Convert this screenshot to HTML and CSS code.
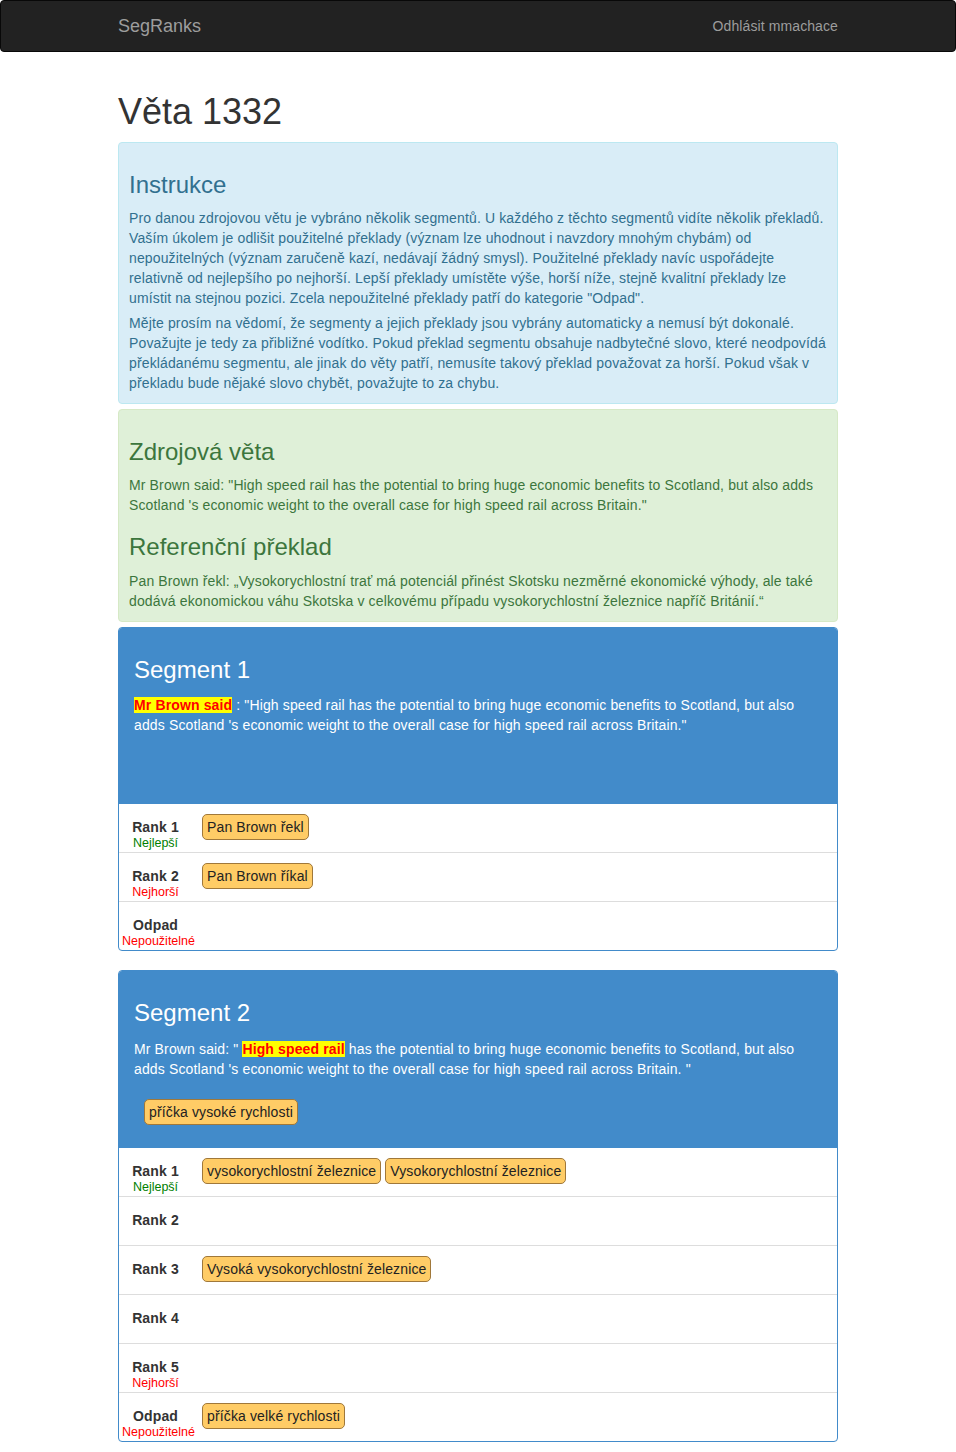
FILE: index.html
```html
<!DOCTYPE html>
<html lang="cs">
<head>
<meta charset="utf-8">
<title>SegRanks</title>
<link rel="stylesheet" href="styles.css">
</head>
<body>
<nav class="navbar">
  <div class="navbar-inner">
    <a class="brand" href="#">SegRanks</a>
    <a class="nav-link" href="#">Odhlásit mmachace</a>
  </div>
</nav>
<main class="container">
  <h1 class="page-title">Věta 1332</h1>

  <div class="alert alert-info">
    <h3>Instrukce</h3>
    <p>Pro danou zdrojovou větu je vybráno několik segmentů. U každého z těchto segmentů vidíte několik překladů. Vaším úkolem je odlišit použitelné překlady (význam lze uhodnout i navzdory mnohým chybám) od nepoužitelných (význam zaručeně kazí, nedávají žádný smysl). Použitelné překlady navíc uspořádejte relativně od nejlepšího po nejhorší. Lepší překlady umístěte výše, horší níže, stejně kvalitní překlady lze umístit na stejnou pozici. Zcela nepoužitelné překlady patří do kategorie "Odpad".</p>
    <p>Mějte prosím na vědomí, že segmenty a jejich překlady jsou vybrány automaticky a nemusí být dokonalé. Považujte je tedy za přibližné vodítko. Pokud překlad segmentu obsahuje nadbytečné slovo, které neodpovídá překládanému segmentu, ale jinak do věty patří, nemusíte takový překlad považovat za horší. Pokud však v překladu bude nějaké slovo chybět, považujte to za chybu.</p>
  </div>

  <div class="alert alert-success">
    <h3>Zdrojová věta</h3>
    <p>Mr Brown said: "High speed rail has the potential to bring huge economic benefits to Scotland, but also adds Scotland 's economic weight to the overall case for high speed rail across Britain."</p>
    <h3>Referenční překlad</h3>
    <p>Pan Brown řekl: „Vysokorychlostní trať má potenciál přinést Skotsku nezměrné ekonomické výhody, ale také dodává ekonomickou váhu Skotska v celkovému případu vysokorychlostní železnice napříč Británií.“</p>
  </div>

  <section class="panel">
    <div class="panel-heading">
      <h3>Segment 1</h3>
      <p><span class="hl">Mr Brown said</span> : "High speed rail has the potential to bring huge economic benefits to Scotland, but also adds Scotland 's economic weight to the overall case for high speed rail across Britain."</p>
      <div class="pool"></div>
    </div>
    <div class="rank-row">
      <div class="rank-label"><b>Rank 1</b><small class="best">Nejlepší</small></div>
      <div class="chips"><span class="chip">Pan Brown řekl</span></div>
    </div>
    <div class="rank-row">
      <div class="rank-label"><b>Rank 2</b><small class="worst">Nejhorší</small></div>
      <div class="chips"><span class="chip">Pan Brown říkal</span></div>
    </div>
    <div class="rank-row">
      <div class="rank-label"><b>Odpad</b><small class="worst wide">Nepoužitelné</small></div>
      <div class="chips"></div>
    </div>
  </section>

  <section class="panel">
    <div class="panel-heading">
      <h3>Segment 2</h3>
      <p>Mr Brown said: " <span class="hl">High speed rail</span> has the potential to bring huge economic benefits to Scotland, but also adds Scotland 's economic weight to the overall case for high speed rail across Britain. "</p>
      <div class="pool"><span class="chip">příčka vysoké rychlosti</span></div>
    </div>
    <div class="rank-row">
      <div class="rank-label"><b>Rank 1</b><small class="best">Nejlepší</small></div>
      <div class="chips"><span class="chip">vysokorychlostní železnice</span><span class="chip">Vysokorychlostní železnice</span></div>
    </div>
    <div class="rank-row">
      <div class="rank-label"><b>Rank 2</b></div>
      <div class="chips"></div>
    </div>
    <div class="rank-row">
      <div class="rank-label"><b>Rank 3</b></div>
      <div class="chips"><span class="chip">Vysoká vysokorychlostní železnice</span></div>
    </div>
    <div class="rank-row">
      <div class="rank-label"><b>Rank 4</b></div>
      <div class="chips"></div>
    </div>
    <div class="rank-row">
      <div class="rank-label"><b>Rank 5</b><small class="worst">Nejhorší</small></div>
      <div class="chips"></div>
    </div>
    <div class="rank-row">
      <div class="rank-label"><b>Odpad</b><small class="worst wide">Nepoužitelné</small></div>
      <div class="chips"><span class="chip">příčka velké rychlosti</span></div>
    </div>
  </section>
</main>
</body>
</html>
```
FILE: styles.css
```css
* { box-sizing: border-box; }

html, body {
  margin: 0;
  padding: 0;
}

body {
  font-family: "Liberation Sans", Arial, sans-serif;
  font-size: 14px;
  line-height: 20px;
  letter-spacing: 0.135px;
  color: #333;
  background: #fff;
}

a { text-decoration: none; }

.navbar {
  height: 52px;
  background: #222;
  border: 1px solid #080808;
  border-radius: 4px;
  margin-bottom: 20px;
}

.navbar-inner {
  width: 720px;
  height: 50px;
  margin: 0 auto;
  display: flex;
  align-items: center;
  justify-content: space-between;
}

.brand {
  font-size: 18px;
  line-height: 20px;
  letter-spacing: 0;
  color: #9d9d9d;
}

.nav-link {
  font-size: 14px;
  line-height: 20px;
  letter-spacing: 0.1px;
  color: #9d9d9d;
}

.container {
  width: 720px;
  margin: 0 auto;
  padding-top: 20px;
}

.page-title {
  font-size: 36px;
  font-weight: 400;
  line-height: 1.1;
  letter-spacing: 0;
  margin: 0 0 10px;
}

h3 {
  font-size: 24px;
  font-weight: 400;
  line-height: 1.1;
  letter-spacing: 0;
  margin: 19px 0 10px;
}

p {
  margin: 0 0 5px;
}

p:last-child { margin-bottom: 0; }

.alert {
  padding: 10px;
  border: 1px solid transparent;
  border-radius: 4px;
  margin-bottom: 5px;
}

.alert-info {
  background: #d9edf7;
  border-color: #bce8f1;
  color: #31708f;
}

.alert-success {
  background: #dff0d8;
  border-color: #d6e9c6;
  color: #3c763d;
}

.panel {
  border: 1px solid #428bca;
  border-radius: 4px;
  margin-bottom: 19px;
  background: #fff;
  overflow: hidden;
}

.panel-heading {
  background: #428bca;
  color: #fff;
  padding: 10px 15px 12px;
  border-bottom: 1px solid #428bca;
}

.panel-heading h3 {
  margin: 19px 0 12px;
}

.panel-heading p {
  margin: 0;
}

.hl {
  background: #ffff00;
  color: #ff0000;
  font-weight: 700;
}

.pool {
  margin-top: 10px;
  min-height: 46px;
  padding: 10px;
  display: flex;
  align-items: flex-start;
  gap: 4px;
}

.chip {
  display: inline-block;
  background: #ffcc66;
  border: 1px solid #a0783a;
  border-radius: 5px;
  padding: 2px 4px;
  line-height: 20px;
  color: #222;
}

.rank-row {
  display: flex;
  align-items: flex-start;
  min-height: 49px;
  padding-top: 10px;
  border-bottom: 1px solid #ddd;
}

.rank-row:last-child {
  border-bottom: 0;
  min-height: 48px;
}

.rank-label {
  width: 73px;
  padding-top: 3px;
  text-align: center;
  display: flex;
  flex-direction: column;
  align-items: center;
}

.rank-label b {
  line-height: 20px;
  color: #333;
  white-space: nowrap;
}

.rank-label small {
  font-size: 12.5px;
  line-height: 12px;
  letter-spacing: 0;
  white-space: nowrap;
}

.rank-label small.wide {
  margin-left: 6px;
}

.best { color: #008000; }
.worst { color: #ff0000; }

.chips {
  margin-left: 10px;
  display: flex;
  gap: 4px;
}
```
